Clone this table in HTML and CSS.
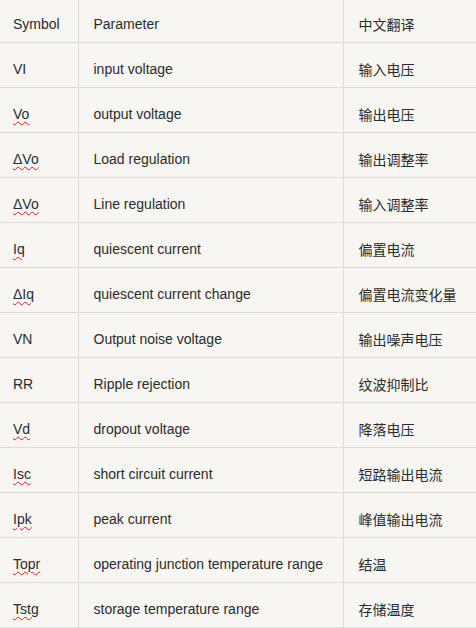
FILE: index.html
```html
<!DOCTYPE html>
<html lang="zh">
<head>
<meta charset="utf-8">
<title>Parameters</title>
<link rel="stylesheet" href="styles.css">
</head>
<body>
<table class="params">
  <colgroup>
    <col class="c-sym"><col class="c-par"><col class="c-zh">
  </colgroup>
  <thead>
    <tr><th>Symbol</th><th>Parameter</th><th class="zh">中文翻译</th></tr>
  </thead>
  <tbody>
    <tr><td>VI</td><td>input voltage</td><td class="zh">输入电压</td></tr>
    <tr><td><span class="sq">Vo</span></td><td>output voltage</td><td class="zh">输出电压</td></tr>
    <tr><td><span class="sq">ΔVo</span></td><td>Load regulation</td><td class="zh">输出调整率</td></tr>
    <tr><td><span class="sq">ΔVo</span></td><td>Line regulation</td><td class="zh">输入调整率</td></tr>
    <tr><td><span class="sq">Iq</span></td><td>quiescent current</td><td class="zh">偏置电流</td></tr>
    <tr><td><span class="sq">ΔIq</span></td><td>quiescent current change</td><td class="zh">偏置电流变化量</td></tr>
    <tr><td>VN</td><td>Output noise voltage</td><td class="zh">输出噪声电压</td></tr>
    <tr><td>RR</td><td>Ripple rejection</td><td class="zh">纹波抑制比</td></tr>
    <tr><td><span class="sq">Vd</span></td><td>dropout voltage</td><td class="zh">降落电压</td></tr>
    <tr><td><span class="sq">Isc</span></td><td>short circuit current</td><td class="zh">短路输出电流</td></tr>
    <tr><td><span class="sq">Ipk</span></td><td>peak current</td><td class="zh">峰值输出电流</td></tr>
    <tr><td><span class="sq">Topr</span></td><td>operating junction temperature range</td><td class="zh">结温</td></tr>
    <tr><td><span class="sq">Tstg</span></td><td>storage temperature range</td><td class="zh">存储温度</td></tr>
  </tbody>
</table>
</body>
</html>
```
FILE: styles.css
```css
html, body {
  margin: 0;
  padding: 0;
  background: #f7f6f3;
}
.params {
  border-collapse: collapse;
  table-layout: fixed;
  width: 476px;
  font-family: "Liberation Sans", Arial, sans-serif;
  font-size: 14px;
  line-height: 16px;
  color: #2b2b2b;
}
.c-sym { width: 78px; }
.c-par { width: 265px; }
.c-zh { width: 133px; }
.params th,
.params td {
  text-align: left;
  font-weight: normal;
  padding: 18px 0 10px 13px;
  border-bottom: 1px solid #dcdcda;
  border-right: 1px solid #dcdcda;
  white-space: nowrap;
  vertical-align: top;
}
.params th {
  padding-top: 16px;
  padding-bottom: 10px;
  height: 16px;
}
.params td:nth-child(2),
.params th:nth-child(2) { padding-left: 15px; }
.params td:last-child,
.params th:last-child {
  border-right: none;
  padding-left: 15px;
}
.zh {
  font-family: "Noto Sans CJK SC", "Liberation Sans", sans-serif;
}
.sq {
  text-decoration-line: underline;
  text-decoration-style: wavy;
  text-decoration-color: #e0191e;
  text-decoration-thickness: 1px;
  text-underline-offset: 2px;
}
```
